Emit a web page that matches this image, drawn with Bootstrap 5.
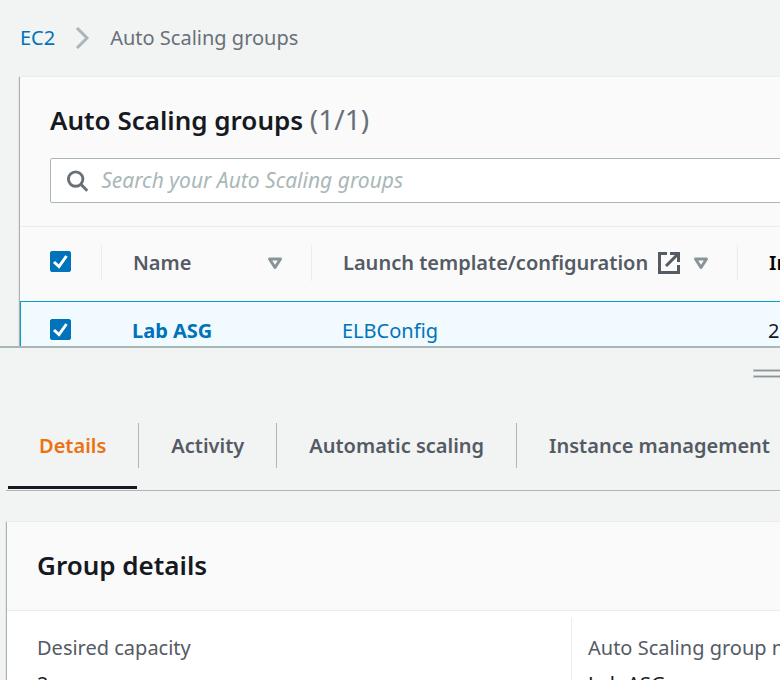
<!DOCTYPE html>
<html lang="en">
<head>
<meta charset="utf-8">
<meta name="viewport" content="width=device-width, initial-scale=1">
<title>Auto Scaling groups</title>
<link href="https://cdn.jsdelivr.net/npm/bootstrap@5.3.0/dist/css/bootstrap.min.css" rel="stylesheet">
<style>
  body { font-family: "Noto Sans", "Open Sans", sans-serif; font-size: 20px; line-height: 30px; color: #16191f; background: #f2f3f3; }
  a { color: #0073bb; text-decoration: none; }
  a:hover { text-decoration: underline; }
  .pane-top { flex: 173 1 0; min-height: 0; }
  .pane-bottom { flex: 166 1 0; min-height: 0; border-top: 2px solid #aab7b8; }
  .wide { min-width: 1135px; }
  .crumbs { padding: 23px 0 23px 20px; gap: 20px; color: #687078; }
  .panel { background: #fff; border-top: 1px solid #eaeded; box-shadow: -1px 1px 1px 0 rgba(0,28,36,.3); }
  .panel-head { background: #fafafa; border-bottom: 1px solid #eaeded; }
  .groups { margin-left: 20px; }
  .groups .panel-head { padding: 25px 30px 23px; }
  h1, h2 { font-size: 26px; line-height: 36px; font-weight: 600; margin: 0; }
  h1 span { font-size: 28px; line-height: 30px; font-weight: 400; color: #687078; }
  .search { margin-top: 20px; height: 45px; border: 1px solid #aab7b8; border-radius: 2px; background: #fff; padding: 0 15px; gap: 12px; }
  .search input { font-size: 21px; font-style: italic; }
  .search input::placeholder { color: #aab7b8; opacity: 1; }
  .grid { table-layout: fixed; border-collapse: separate; border-spacing: 0; }
  .grid th { height: 74px; padding: 0 0 2px; background: #fafafa; font-weight: 600; color: #545b64; }
  .grid th .cell { height: 36px; padding-left: 31px; border-left: 1px solid #eaeded; }
  .grid th .pick { padding-left: 30px; border-left: 0; }
  .grid td { height: 60px; padding: 0 0 0 31px; background: #f1faff; border-top: 1px solid #00a1c9; border-bottom: 1px solid #00a1c9; }
  .grid td.pick { padding-left: 29px; border-left: 1px solid #00a1c9; }
  .grid .form-check-input { display: block; width: 21px; height: 21px; margin: 0 0 3px; border-radius: 2px; }
  .grid .form-check-input:checked { background-color: #0073bb; border-color: #0073bb; background-size: 21px; background-image: url("data:image/svg+xml,%3csvg xmlns='http://www.w3.org/2000/svg' viewBox='0 0 21 21'%3e%3cpath fill='none' stroke='%23fff' stroke-width='3' d='M4 11l5 4.500 7.500-10.500'/%3e%3c/svg%3e"); }
  .c-pick { width: 81px; } .c-name { width: 210px; } .c-launch { width: 426px; }
  .sort { line-height: 0; }
  .launch-head { gap: 10px; }
  .grip { width: 51px; margin-left: 753px; padding: 21px 0 18px; }
  .grip i { height: 3px; margin-bottom: 3px; border: 1px solid #c8cccc; background: #879596; }
  .tabs { margin: 24px 0 30px 6px; border-bottom: 1px solid #aab7b8; }
  .tabs .nav-link { padding: 0; height: 66px; border-radius: 0; color: #545b64; font-weight: 600; line-height: 45px; border-bottom: 3px solid transparent; margin: 0 1px 1px 2px; }
  .tabs .nav-link span { display: block; padding: 0 31px; }
  .tabs .nav-item + .nav-item { background: linear-gradient(#aab7b8, #aab7b8) 0 0 / 1px 45px no-repeat; }
  .tabs .nav-link.active { color: #ec7211; border-bottom-color: #16191f; }
  .details { margin-left: 7px; }
  .details .panel-head { padding: 25px 30px 27px; }
  .details dl { padding: 7px 0; }
  .details dl > div { padding: 15px 30px; }
  .details dl > div + div { border-left: 1px solid #eaeded; padding-left: 16px; }
  dt { font-weight: 400; color: #545b64; }
  dd { margin: 6px 0 0; }
</style>
</head>
<body class="vh-100 overflow-hidden d-flex flex-column">
<main class="pane-top overflow-hidden">
  <div class="wide">
    <nav class="crumbs d-flex align-items-center" aria-label="Breadcrumb">
      <a href="#">EC2</a>
      <svg width="15" height="24" viewBox="0 0 15 24" fill="none" stroke="#aab7b8" stroke-width="3" aria-hidden="true"><path d="M2 2l10 10L2 22"/></svg>
      <span>Auto Scaling groups</span>
    </nav>
    <section class="panel groups">
      <div class="panel-head">
        <h1>Auto Scaling groups <span>(1/1)</span></h1>
        <label class="search d-flex align-items-center">
          <svg width="24" height="24" viewBox="0 0 24 24" fill="none" stroke="#687078" stroke-width="3" aria-hidden="true"><circle cx="10" cy="10" r="7.500"/><path d="M15 15l7 7"/></svg>
          <input class="form-control border-0 p-0 shadow-none bg-transparent" type="search" placeholder="Search your Auto Scaling groups" aria-label="Search your Auto Scaling groups">
        </label>
      </div>
      <table class="grid w-100">
        <colgroup><col class="c-pick"><col class="c-name"><col class="c-launch"><col></colgroup>
        <thead>
          <tr>
            <th><div class="cell pick d-flex align-items-center"><input class="form-check-input" type="checkbox" checked aria-label="Select all groups"></div></th>
            <th><div class="cell d-flex align-items-center justify-content-between pe-4"><span>Name</span>
              <button class="btn p-0 border-0 sort me-1" type="button" aria-label="Sort by name"><svg width="16" height="13" viewBox="0 0 16 13" fill="none" stroke="#879596" stroke-width="3" stroke-linejoin="round"><path d="M2.500 2h11L8 10.500z"/></svg></button></div></th>
            <th><div class="cell launch-head d-flex align-items-center"><span>Launch template/configuration</span>
              <svg width="22" height="22" viewBox="0 0 22 22" fill="none" stroke="#545b64" stroke-width="3" aria-hidden="true"><path d="M9 1.500H1.500v19h19V13M12 1.500h8.500V10M20 2L8 14"/></svg>
              <button class="btn p-0 border-0 sort ms-auto me-4" type="button" aria-label="Sort by launch template"><svg class="me-1" width="16" height="13" viewBox="0 0 16 13" fill="none" stroke="#879596" stroke-width="3" stroke-linejoin="round"><path d="M2.500 2h11L8 10.500z"/></svg></button></div></th>
            <th><div class="cell d-flex align-items-center text-body-emphasis">Instances</div></th>
          </tr>
        </thead>
        <tbody>
          <tr>
            <td class="pick"><input class="form-check-input" type="checkbox" checked aria-label="Select Lab ASG"></td>
            <td><a class="fw-bold" href="#">Lab ASG</a></td>
            <td><a href="#">ELBConfig</a></td>
            <td>2</td>
          </tr>
        </tbody>
      </table>
    </section>
  </div>
</main>
<section class="pane-bottom overflow-hidden" aria-label="Group details">
  <div class="wide">
    <button class="grip btn border-0 rounded-0 d-block" type="button" aria-label="Resize panel"><i class="d-block"></i><i class="d-block"></i></button>
    <ul class="nav tabs flex-nowrap text-nowrap">
      <li class="nav-item"><a class="nav-link active" href="#" aria-current="page"><span>Details</span></a></li>
      <li class="nav-item"><a class="nav-link" href="#"><span>Activity</span></a></li>
      <li class="nav-item"><a class="nav-link" href="#"><span>Automatic scaling</span></a></li>
      <li class="nav-item"><a class="nav-link" href="#"><span>Instance management</span></a></li>
    </ul>
    <div class="panel details">
      <div class="panel-head"><h2>Group details</h2></div>
      <dl class="row g-0 m-0">
        <div class="col-6"><dt>Desired capacity</dt><dd>2</dd></div>
        <div class="col-6"><dt>Auto Scaling group name</dt><dd>Lab ASG</dd></div>
      </dl>
    </div>
  </div>
</section>
<script src="https://cdn.jsdelivr.net/npm/bootstrap@5.3.0/dist/js/bootstrap.bundle.min.js"></script>
</body>
</html>
